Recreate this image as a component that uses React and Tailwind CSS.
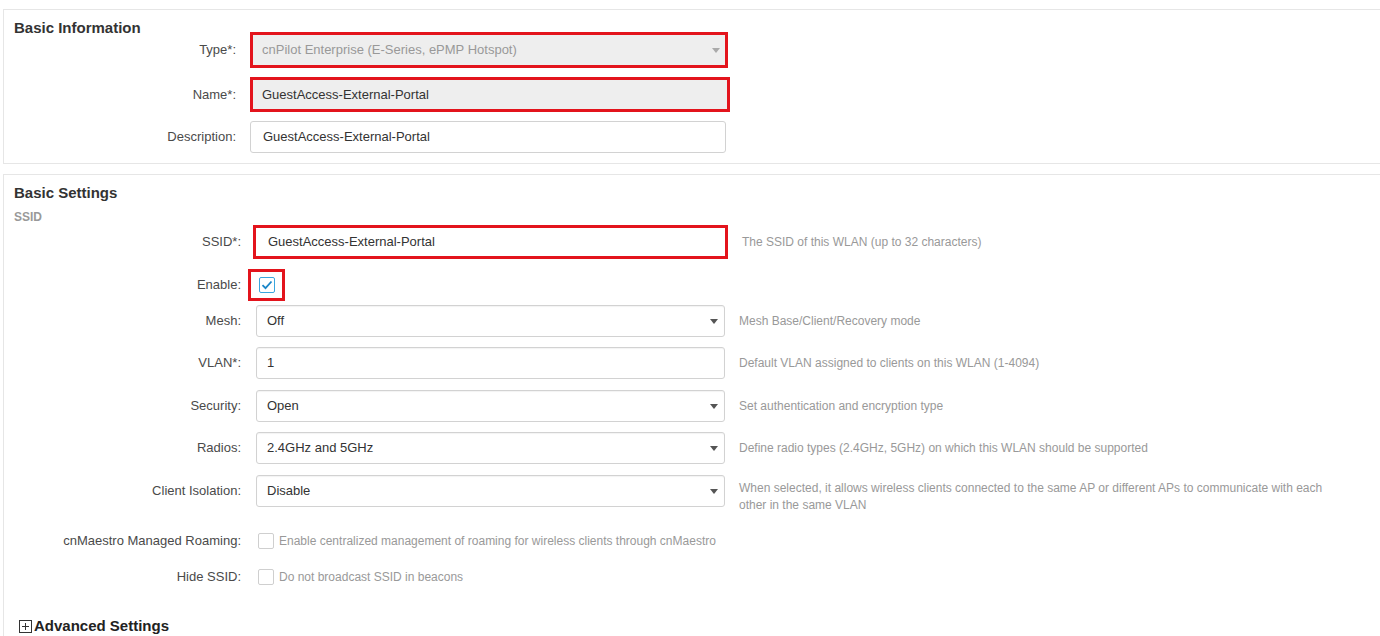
import React from 'react'

const font = { fontFamily: '"Liberation Sans", Arial, sans-serif' }

function Caret({ color = '#555' }) {
  return (
    <svg width="8" height="5" viewBox="0 0 8 5" className="shrink-0">
      <path d="M0 0 L8 0 L4 5 Z" fill={color} />
    </svg>
  )
}

function Check({ checked }) {
  if (checked) {
    return (
      <span className="flex h-[16px] w-[16px] items-center justify-center rounded-[2px] border border-[#3aa6de] bg-white">
        <svg width="12" height="10" viewBox="0 0 12 10">
          <path d="M1.5 5.2 L4.5 8.2 L10.5 1.5" fill="none" stroke="#1a86c8" strokeWidth="1.8" />
        </svg>
      </span>
    )
  }
  return <span className="block h-[16px] w-[16px] rounded-[2px] border border-[#cfcfcf] bg-white" />
}

function Field({ value, select, className = '' }) {
  return (
    <div className={`flex h-[32px] w-[469px] items-center justify-between rounded-[3px] border border-[#d2d2d2] bg-white pl-[10px] pr-[6px] text-[13px] text-[#333] shadow-[inset_0_1px_1px_rgba(0,0,0,0.05)] ${className}`}>
      <span>{value}</span>
      {select && <Caret />}
    </div>
  )
}

function Hint({ children }) {
  return <div className="ml-[14px] text-[12px] leading-[17px] text-[#999]">{children}</div>
}

function Row({ label, h = 32, mt = 0, children, hint }) {
  return (
    <div className="flex items-center" style={{ height: h, marginTop: mt }}>
      <div className="w-[238px] shrink-0 pr-[1px] text-right text-[13px] text-[#4a4a4a]">{label}</div>
      {children}
      {hint}
    </div>
  )
}

export default function App() {
  return (
    <div className="h-[636px] w-[1380px] overflow-hidden bg-white" style={font}>
      {/* Basic Information */}
      <div className="ml-[3px] mt-[9px] w-[1390px] border-b border-l border-t border-[#e6e6e6] pb-[10px] pt-[8px]">
        <div className="pl-[10px] text-[15px] font-bold leading-[20px] text-[#333]">Basic Information</div>
        <div className="-mt-[6px] flex h-[36px] items-center">
          <div className="w-[232px] shrink-0 text-right text-[13px] text-[#4a4a4a]">Type*:</div>
          <div className="ml-[14px] border-[3px] border-[#e3141c]">
            <div className="flex h-[30px] w-[472px] items-center justify-between bg-[#eeeeee] pl-[9px] pr-[5px] text-[13px] text-[#999]">
              <span>cnPilot Enterprise (E-Series, ePMP Hotspot)</span>
              <Caret color="#aaa" />
            </div>
          </div>
        </div>
        <div className="mt-[9px] flex h-[35px] items-center">
          <div className="w-[232px] shrink-0 text-right text-[13px] text-[#4a4a4a]">Name*:</div>
          <div className="ml-[14px] border-[3px] border-[#e3141c]">
            <div className="flex h-[29px] w-[474px] items-center bg-[#eeeeee] pl-[9px] text-[13px] text-[#333]">
              GuestAccess-External-Portal
            </div>
          </div>
        </div>
        <div className="mt-[9px] flex h-[32px] items-center">
          <div className="w-[232px] shrink-0 text-right text-[13px] text-[#4a4a4a]">Description:</div>
          <div className="ml-[14px] flex h-[32px] w-[476px] items-center rounded-[3px] border border-[#d2d2d2] pl-[12px] text-[13px] text-[#333]">
            GuestAccess-External-Portal
          </div>
        </div>
      </div>

      {/* Basic Settings */}
      <div className="ml-[3px] mt-[10px] h-[500px] w-[1390px] border-l border-t border-[#e6e6e6] pt-[8px]">
        <div className="pl-[10px] text-[15px] font-bold leading-[20px] text-[#333]">Basic Settings</div>
        <div className="mt-[7px] h-[15px] pl-[10px] text-[12px] font-bold leading-[15px] text-[#999]">SSID</div>

        <Row label="SSID*:" h={34} hint={<Hint>The SSID of this WLAN (up to 32 characters)</Hint>}>
          <div className="ml-[11px] border-[3px] border-[#e3141c]">
            <div className="flex h-[28px] w-[469px] items-center bg-white pl-[12px] text-[13px] text-[#333]">
              GuestAccess-External-Portal
            </div>
          </div>
        </Row>

        <Row label="Enable:" h={32} mt={10}>
          <div className="ml-[6px] flex h-[32px] w-[37px] items-center justify-center border-[3px] border-[#e3141c]">
            <Check checked />
          </div>
        </Row>

        <Row label="Mesh:" mt={4} hint={<Hint>Mesh Base/Client/Recovery mode</Hint>}>
          <Field value="Off" select className="ml-[14px]" />
        </Row>
        <Row label="VLAN*:" mt={10} hint={<Hint>Default VLAN assigned to clients on this WLAN (1-4094)</Hint>}>
          <Field value="1" className="ml-[14px]" />
        </Row>
        <Row label="Security:" mt={11} hint={<Hint>Set authentication and encryption type</Hint>}>
          <Field value="Open" select className="ml-[14px]" />
        </Row>
        <Row label="Radios:" mt={10} hint={<Hint>Define radio types (2.4GHz, 5GHz) on which this WLAN should be supported</Hint>}>
          <Field value="2.4GHz and 5GHz" select className="ml-[14px]" />
        </Row>
        <Row
          label="Client Isolation:"
          mt={11}
          hint={
            <div className="ml-[14px] mt-[5px] w-[590px] self-start text-[12px] leading-[17px] text-[#999]">
              When selected, it allows wireless clients connected to the same AP or different APs to communicate with each other in the same VLAN
            </div>
          }
        >
          <Field value="Disable" select className="ml-[14px]" />
        </Row>

        <Row label="cnMaestro Managed Roaming:" h={20} mt={24}>
          <div className="ml-[16px] flex items-center gap-[5px] text-[12px] text-[#999]">
            <Check />
            <span>Enable centralized management of roaming for wireless clients through cnMaestro</span>
          </div>
        </Row>
        <Row label="Hide SSID:" h={20} mt={16}>
          <div className="ml-[16px] flex items-center gap-[5px] text-[12px] text-[#999]">
            <Check />
            <span>Do not broadcast SSID in beacons</span>
          </div>
        </Row>

        <div className="mt-[29px] flex items-center gap-[2px] pl-[15px] text-[15px] font-bold leading-[20px] text-[#222]">
          <svg width="13" height="13" viewBox="0 0 13 13">
            <rect x="0.5" y="0.5" width="12" height="12" fill="none" stroke="#333" />
            <path d="M3 6.5 H10 M6.5 3 V10" stroke="#333" />
          </svg>
          <span>Advanced Settings</span>
        </div>
      </div>
    </div>
  )
}
